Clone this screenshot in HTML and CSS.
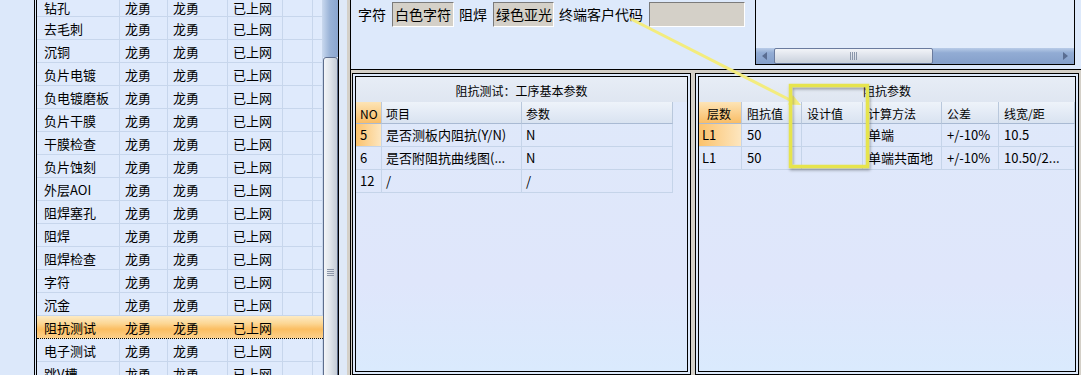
FILE: index.html
```html
<!DOCTYPE html>
<html lang="zh">
<head>
  <meta charset="UTF-8" />
  <title>工序参数</title>
  <link rel="stylesheet" href="styles.css">
</head>
<body>
<div class="app">

  <div class="side">
    <div class="side-blank"></div>
    <div class="side-frame">
      <div class="grid-wrap">
        <div class="grid">
          <div class="grow first"><span>钻孔</span><span>龙勇</span><span>龙勇</span><span>已上网</span><span></span><span></span></div>
          <div class="grow"><span>去毛刺</span><span>龙勇</span><span>龙勇</span><span>已上网</span><span></span><span></span></div>
          <div class="grow"><span>沉铜</span><span>龙勇</span><span>龙勇</span><span>已上网</span><span></span><span></span></div>
          <div class="grow"><span>负片电镀</span><span>龙勇</span><span>龙勇</span><span>已上网</span><span></span><span></span></div>
          <div class="grow"><span>负电镀磨板</span><span>龙勇</span><span>龙勇</span><span>已上网</span><span></span><span></span></div>
          <div class="grow"><span>负片干膜</span><span>龙勇</span><span>龙勇</span><span>已上网</span><span></span><span></span></div>
          <div class="grow"><span>干膜检查</span><span>龙勇</span><span>龙勇</span><span>已上网</span><span></span><span></span></div>
          <div class="grow"><span>负片蚀刻</span><span>龙勇</span><span>龙勇</span><span>已上网</span><span></span><span></span></div>
          <div class="grow"><span>外层AOI</span><span>龙勇</span><span>龙勇</span><span>已上网</span><span></span><span></span></div>
          <div class="grow"><span>阻焊塞孔</span><span>龙勇</span><span>龙勇</span><span>已上网</span><span></span><span></span></div>
          <div class="grow"><span>阻焊</span><span>龙勇</span><span>龙勇</span><span>已上网</span><span></span><span></span></div>
          <div class="grow"><span>阻焊检查</span><span>龙勇</span><span>龙勇</span><span>已上网</span><span></span><span></span></div>
          <div class="grow"><span>字符</span><span>龙勇</span><span>龙勇</span><span>已上网</span><span></span><span></span></div>
          <div class="grow"><span>沉金</span><span>龙勇</span><span>龙勇</span><span>已上网</span><span></span><span></span></div>
          <div class="grow sel"><span>阻抗测试</span><span>龙勇</span><span>龙勇</span><span>已上网</span><span></span><span></span></div>
          <div class="grow"><span>电子测试</span><span>龙勇</span><span>龙勇</span><span>已上网</span><span></span><span></span></div>
          <div class="grow"><span>跳V槽</span><span>龙勇</span><span>龙勇</span><span>已上网</span><span></span><span></span></div>
        </div>
        <div class="vscroll">
          <div class="vtrack"></div>
          <div class="vthumb"><i class="vgrip"></i></div>
        </div>
      </div>
    </div>
  </div>

  <div class="splitter"></div>

  <div class="main">
    <div class="main-in">
      <div class="top">
        <div class="fields">
          <span class="flabel">字符</span>
          <span class="fbox w62">白色字符</span>
          <span class="flabel">阻焊</span>
          <span class="fbox w61">绿色亚光</span>
          <span class="flabel">终端客户代码</span>
          <span class="fbox w96"></span>
        </div>
        <div class="listbox">
          <div class="hscroll">
            <div class="harrow"><i class="tri-left"></i></div>
            <div class="hthumb"><i class="hgrip"></i></div>
            <div class="hspace"></div>
            <div class="harrow"><i class="tri-right"></i></div>
          </div>
        </div>
      </div>

      <div class="panels">
        <div class="panel panel-left">
          <div class="panel-in">
            <div class="ptitle">阻抗测试：工序基本参数</div>
            <div class="ltab">
              <div class="trow thead"><span class="rowhead">NO</span><span>项目</span><span>参数</span></div>
              <div class="trow"><span class="rowhead cur">5</span><span>是否测板内阻抗(Y/N)</span><span>N</span></div>
              <div class="trow"><span>6</span><span>是否附阻抗曲线图(...</span><span>N</span></div>
              <div class="trow"><span>12</span><span>/</span><span>/</span></div>
            </div>
          </div>
        </div>
        <div class="panel panel-right">
          <div class="panel-in">
            <div class="ptitle">阻抗参数</div>
            <div class="rtab">
              <div class="trow thead"><span class="rowhead first">层数</span><span>阻抗值</span><span>设计值</span><span>计算方法</span><span>公差</span><span>线宽/距</span></div>
              <div class="trow"><span class="rowhead cur first">L1</span><span>50</span><span></span><span>单端</span><span>+/-10%</span><span>10.5</span></div>
              <div class="trow"><span class="first">L1</span><span>50</span><span></span><span>单端共面地</span><span>+/-10%</span><span>10.50/2...</span></div>
            </div>
          </div>
        </div>
      </div>
    </div>
  </div>

  <!-- 标注：箭头和方框 -->
  <svg class="mark" width="1081" height="375" viewBox="0 0 1081 375">
    <defs>
      <filter id="sombra" x="-20%" y="-20%" width="140%" height="140%">
        <feDropShadow dx="1" dy="2" stdDeviation="1.5" flood-color="#000" flood-opacity="0.35"/>
      </filter>
    </defs>
    <line x1="631" y1="19" x2="792" y2="101" stroke="#f3ec7e" stroke-width="3"/>
    <polygon points="801,105 788,104.5 792.8,95" fill="#f3ec7e"/>
    <rect x="790.5" y="85.5" width="77" height="81" fill="none" stroke="#e6e44e" stroke-width="3.5" filter="url(#sombra)"/>
  </svg>
</div>
</body>
</html>
```

FILE: styles.css
```css
* {
  box-sizing: border-box;
}

body {
  margin: 0;
  font-family: "Noto Sans CJK SC", "Liberation Sans", sans-serif;
  color: #000;
  background: #dde9fb;
}

.app {
  position: relative;
  display: flex;
  width: 1081px;
  height: 375px;
  overflow: hidden;
  background: #dde9fb;
}

/* ---------- lista de procesos ---------- */
.side {
  display: flex;
  flex: none;
  width: 339px;
}

.side-blank {
  width: 34px;
  background: #dce8fa;
}

.side-frame {
  display: flex;
  border-left: 1px solid #000;
  padding-left: 1px;
}

.grid-wrap {
  display: flex;
  border-left: 1px solid #000;
  border-right: 1px solid #000;
}

.grid {
  width: 286px;
  background: #dfeafc;
}

.grow {
  display: grid;
  grid-template-columns: 83px 48px 60px 55px 30px 10px;
  height: 23px;
}

.grow span {
  height: 23px;
  padding: 2px 0 0 5px;
  line-height: 20px;
  font-size: 13px;
  white-space: nowrap;
  overflow: hidden;
  border-right: 1px solid #c7d6ec;
  border-bottom: 1px solid #c7d6ec;
}

.grow span:first-child {
  padding-left: 7px;
}

/* primera fila, cortada por el scroll */
.grow.first {
  height: 17px;
}

.grow.first span {
  height: 17px;
  padding-top: 0;
  line-height: 16px;
}

.grow.sel {
  border-top: 1px dotted #000;
  border-bottom: 1px dotted #000;
  margin-top: -1px;
  height: 24px;
  background: linear-gradient(#fdebc4 0%, #fcd693 35%, #fbbe62 60%, #fcd08a 100%);
}

.grow.sel span {
  height: 22px;
  border: 0;
  padding-top: 2px;
}

.vscroll {
  width: 15px;
  display: flex;
  flex-direction: column;
}

.vtrack {
  height: 57px;
  flex: none;
  background: linear-gradient(to right, #c3d4ec, #9ab3d7 45%, #8aa5cf);
}

.vthumb {
  position: relative;
  height: 430px;
  flex: none;
  border: 1px solid #5d6d8c;
  border-radius: 3px;
  background: linear-gradient(to right, #f3f5f8, #dfe4ea 50%, #c4ccd7);
}

.vgrip {
  position: absolute;
  left: 3px;
  top: 211px;
  width: 7px;
  height: 7px;
  background: repeating-linear-gradient(#8c96a8 0 1px, transparent 1px 2px);
}

/* ---------- zona principal ---------- */
.splitter {
  width: 8px;
  flex: none;
  background: #dfe9f7;
}

.main {
  flex: 1;
  display: flex;
  border-left: 3px solid #d4d0c8;
}

.main-in {
  flex: 1;
  display: flex;
  flex-direction: column;
  border-left: 1px solid #000;
}

.top {
  display: flex;
  align-items: flex-start;
  height: 70px;
  flex: none;
  border-bottom: 1px solid #000;
  background: #dde9fb;
}

.fields {
  display: flex;
  align-items: center;
  padding: 2px 0 0 7px;
  font-size: 14px;
}

.flabel {
  margin-right: 6px;
  line-height: 25px;
  white-space: nowrap;
}

.fbox {
  height: 25px;
  margin-right: 5px;
  padding-left: 2px;
  line-height: 23px;
  white-space: nowrap;
  background: #d4d0c8;
  border: 1px solid;
  border-color: #7b7b7b #fff #fff #7b7b7b;
}

.w62 { width: 62px; }
.w61 { width: 61px; }
.w96 { width: 96px; }

.listbox {
  display: flex;
  flex-direction: column;
  justify-content: flex-end;
  width: 320px;
  height: 66px;
  margin: -1px 6px 0 auto;
  border: 1px solid #000;
  background: #e2ecfb;
}

.hscroll {
  display: flex;
  height: 16px;
  background: linear-gradient(#b9cce8, #92acd4 30%, #849fca);
}

.harrow {
  width: 17px;
  display: flex;
  align-items: center;
  justify-content: center;
}

.tri-left,
.tri-right {
  width: 0;
  height: 0;
  border-top: 4px solid transparent;
  border-bottom: 4px solid transparent;
}

.tri-left {
  border-right: 5px solid #5a6d92;
}

.tri-right {
  border-left: 5px solid #5a6d92;
}

.hthumb {
  position: relative;
  width: 159px;
  margin-left: 1px;
  border: 1px solid #6a7b9e;
  border-radius: 2px;
  background: linear-gradient(#f2f4f8, #dde2ea 50%, #c9d1dc);
}

.hgrip {
  position: absolute;
  left: 75px;
  top: 3px;
  width: 7px;
  height: 8px;
  background: repeating-linear-gradient(to right, #8a96aa 0 1px, transparent 1px 2px);
}

.hspace {
  flex: 1;
}

/* ---------- paneles inferiores ---------- */
.panels {
  flex: 1;
  display: flex;
  gap: 4px;
  padding: 3px 2px 0 1px;
  background: #d4d0c8;
}

.panel {
  border: 1px solid #000;
  padding: 2px;
  background: #dde9fb;
}

.panel-left {
  width: 339px;
  flex: none;
}

.panel-right {
  flex: 1;
}

.panel-in {
  height: 100%;
  border: 1px solid #000;
  background: linear-gradient(#dfe9fa, #dfe6fb 70%, #daeafd);
}

.ptitle {
  height: 25px;
  padding-top: 3px;
  line-height: 22px;
  font-size: 12px;
  text-align: center;
  background: linear-gradient(#e7edf6, #dfe6f1);
}

.trow {
  display: grid;
  height: 23px;
}

.ltab .trow {
  width: 317px;
  grid-template-columns: 26px 140px 151px;
}

.rtab .trow {
  grid-template-columns: 43px 60px 61px 79px 57px 76px;
}

.trow span {
  padding: 1px 0 0 4px;
  line-height: 20px;
  font-size: 13px;
  white-space: nowrap;
  overflow: hidden;
  border-right: 1px solid #c5d4e9;
  border-bottom: 1px solid #c5d4e9;
}

.rtab .trow span {
  padding-left: 5px;
}

.rtab .trow span.first {
  padding-left: 3px;
}

.trow.thead {
  height: 22px;
  background: linear-gradient(#eef3fa, #d8e2f0);
}

.trow.thead span {
  padding-top: 3px;
  line-height: 17px;
  font-size: 12px;
  border-right-color: #b9c8dc;
  border-bottom-color: #a9bad3;
}

.rtab .thead span.first {
  padding-left: 8px;
}

.thead .rowhead {
  background: linear-gradient(#fde4b6, #f9bd66);
}

.rowhead.cur {
  background: linear-gradient(to right, #fbc26c, #fde6bf);
}

/* ---------- marca amarilla ---------- */
.mark {
  position: absolute;
  left: 0;
  top: 0;
  pointer-events: none;
}
```
